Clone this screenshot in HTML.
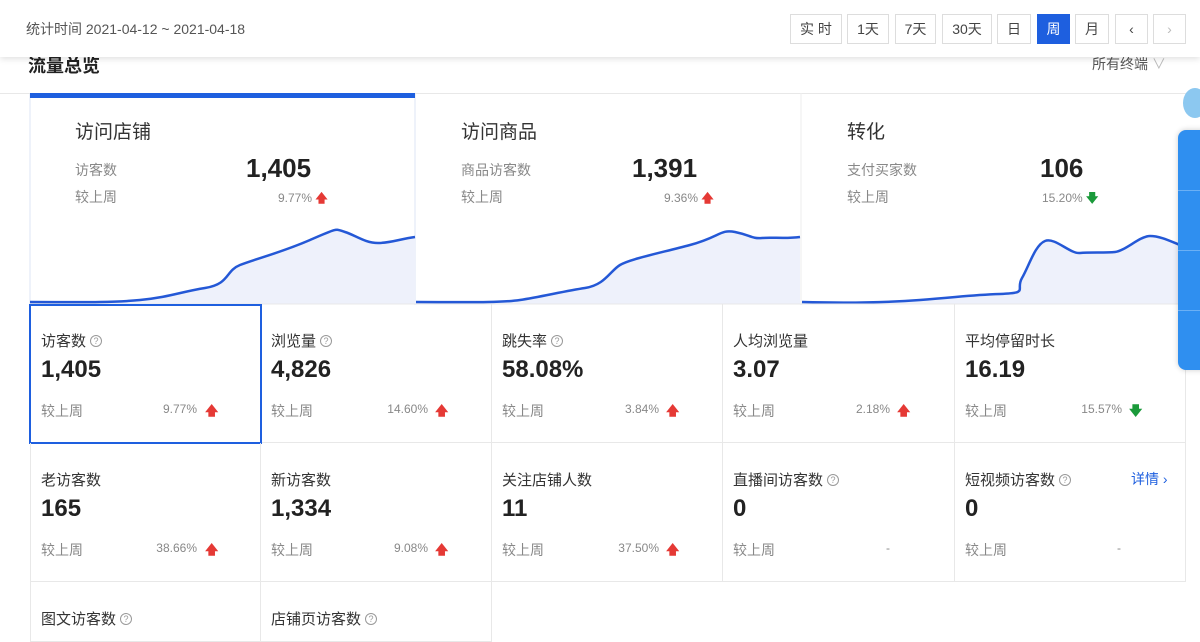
<!DOCTYPE html><html><head><meta charset="utf-8"><style>
*{box-sizing:border-box;margin:0;padding:0}
body{width:1200px;height:634px;overflow:hidden;background:#fff;font-family:"Liberation Sans","Noto Sans CJK SC",sans-serif;position:relative;color:#333}
.hdr{position:absolute;left:0;top:0;width:1200px;height:57px;background:#fff;box-shadow:0 2px 6px rgba(0,0,0,.12);z-index:2}
.hdr .t{position:absolute;left:26px;top:19px;font-size:14px;color:#555}
.btn{position:absolute;top:14px;height:30px;border:1px solid #ddd;font-size:14px;color:#444;text-align:center;line-height:28px;background:#fff}
.btn.on{background:#1e5fdf;border-color:#1e5fdf;color:#fff}
.a{position:absolute}
.grey{color:#888}
.cell{position:absolute;border-right:1px solid #e8e8e8;border-bottom:1px solid #e8e8e8}
.cell .n{position:absolute;left:10px;top:26px;font-size:15px;color:#333}
.cell .v{position:absolute;left:10px;top:52px;font-size:24px;font-weight:bold;color:#222}
.cell .c{position:absolute;left:10px;top:97px;font-size:14px;color:#888}
.cell .p{position:absolute;right:63px;top:98px;font-size:12px;color:#888}
.cell .ar{position:absolute;left:174px;top:98px;font-size:13px;font-weight:bold}
.q{display:inline-block;width:12px;height:12px;border:1px solid #999;border-radius:50%;font-size:9px;line-height:10px;text-align:center;color:#999;vertical-align:2px;margin-left:4px}
.up{color:#e53935}.dn{color:#1a9a3a}
</style></head><body>
<div class="hdr"><div class="t">统计时间 2021-04-12 ~ 2021-04-18</div>
<div class="btn" style="left:790px;width:52px">实 时</div>
<div class="btn" style="left:847px;width:42px">1天</div>
<div class="btn" style="left:895px;width:41px">7天</div>
<div class="btn" style="left:942px;width:50px">30天</div>
<div class="btn" style="left:997px;width:34px">日</div>
<div class="btn on" style="left:1037px;width:33px">周</div>
<div class="btn" style="left:1075px;width:34px">月</div>
<div class="btn" style="left:1115px;width:33px">‹</div>
<div class="btn" style="left:1153px;width:33px;color:#bbb">›</div>
</div>
<div class="a" style="left:28px;top:52px;font-size:18px;font-weight:bold;color:#222">流量总览</div>
<div class="a" style="left:1092px;top:54px;font-size:14px;color:#555">所有终端 <span style="color:#bbb">∨</span></div>
<div class="a" style="left:0;top:93px;width:1200px;border-top:1px solid #e8e8e8"></div>
<svg class="a" style="left:0;top:93px" width="1200" height="212">
<line x1="30" y1="0" x2="30" y2="212" stroke="#dde6f5"/>
<line x1="415" y1="0" x2="415" y2="212" stroke="#dde6f5"/>
<line x1="801" y1="0" x2="801" y2="212" stroke="#eee"/>
<g fill="#eef1fb" stroke="none">
<path d="M30,209 C70,209 110,210 140,207 S180,199 205,195 S225,178 240,172 S280,160 310,147 S335,136 345,139 S365,150 378,150 S400,146 415,144 L415,211 L30,211Z"/>
<path d="M416,209 C460,209 500,210 520,207 S565,198 585,195 S610,178 620,172 S660,160 690,152 S720,136 735,139 S752,146 762,145 S785,146 800,144 L800,211 L416,211Z"/>
<path d="M802,209 C840,210 880,210 920,207 S970,202 1000,201 S1015,197 1022,185 S1035,152 1045,148 S1070,161 1080,160 S1105,160 1115,159 S1140,143 1150,143 S1170,148 1180,152 L1180,211 L802,211Z"/>
</g>
<g fill="none" stroke="#2458d6" stroke-width="2.5">
<path d="M30,209 C70,209 110,210 140,207 S180,199 205,195 S225,178 240,172 S280,160 310,147 S335,136 345,139 S365,150 378,150 S400,146 415,144"/>
<path d="M416,209 C460,209 500,210 520,207 S565,198 585,195 S610,178 620,172 S660,160 690,152 S720,136 735,139 S752,146 762,145 S785,146 800,144"/>
<path d="M802,209 C840,210 880,210 920,207 S970,202 1000,201 S1015,197 1022,185 S1035,152 1045,148 S1070,161 1080,160 S1105,160 1115,159 S1140,143 1150,143 S1170,148 1180,152"/>
</g>
<rect x="30" y="0" width="385" height="5" fill="#1e5fdf"/>
<line x1="30" y1="211" x2="1186" y2="211" stroke="#e8e8e8"/>
</svg>
<div class="a" style="left:75px;top:117px;font-size:19px;color:#333">访问店铺</div>
<div class="a grey" style="left:75px;top:160px;font-size:14px">访客数</div>
<div class="a grey" style="left:75px;top:187px;font-size:14px">较上周</div>
<div class="a" style="left:246px;top:153px;font-size:26px;font-weight:bold;color:#222">1,405</div>
<div class="a grey" style="left:278px;top:189px;font-size:12px">9.77% <b class="up">🡅</b></div>
<div class="a" style="left:461px;top:117px;font-size:19px;color:#333">访问商品</div>
<div class="a grey" style="left:461px;top:160px;font-size:14px">商品访客数</div>
<div class="a grey" style="left:461px;top:187px;font-size:14px">较上周</div>
<div class="a" style="left:632px;top:153px;font-size:26px;font-weight:bold;color:#222">1,391</div>
<div class="a grey" style="left:664px;top:189px;font-size:12px">9.36% <b class="up">🡅</b></div>
<div class="a" style="left:847px;top:117px;font-size:19px;color:#333">转化</div>
<div class="a grey" style="left:847px;top:160px;font-size:14px">支付买家数</div>
<div class="a grey" style="left:847px;top:187px;font-size:14px">较上周</div>
<div class="a" style="left:1040px;top:153px;font-size:26px;font-weight:bold;color:#222">106</div>
<div class="a grey" style="left:1042px;top:189px;font-size:12px">15.20% <b class="dn">🡇</b></div>

<div class="cell" style="left:30px;top:304px;width:231px;height:139px;border-left:1px solid #e8e8e8"><div class="n">访客数<span class="q">?</span></div><div class="v">1,405</div><div class="c">较上周</div><div class="p">9.77%</div><div class="ar up">🡅</div></div>
<div class="cell" style="left:261px;top:304px;width:231px;height:139px"><div class="n">浏览量<span class="q">?</span></div><div class="v">4,826</div><div class="c">较上周</div><div class="p">14.60%</div><div class="ar up">🡅</div></div>
<div class="cell" style="left:492px;top:304px;width:231px;height:139px"><div class="n">跳失率<span class="q">?</span></div><div class="v">58.08%</div><div class="c">较上周</div><div class="p">3.84%</div><div class="ar up">🡅</div></div>
<div class="cell" style="left:723px;top:304px;width:232px;height:139px"><div class="n">人均浏览量</div><div class="v">3.07</div><div class="c">较上周</div><div class="p" style="right:64px">2.18%</div><div class="ar up">🡅</div></div>
<div class="cell" style="left:955px;top:304px;width:231px;height:139px"><div class="n">平均停留时长</div><div class="v">16.19</div><div class="c">较上周</div><div class="p">15.57%</div><div class="ar dn">🡇</div></div>
<div class="a" style="left:29px;top:304px;width:233px;height:140px;border:2px solid #1e5fdf"></div>

<div class="cell" style="left:30px;top:443px;width:231px;height:139px;border-left:1px solid #e8e8e8"><div class="n">老访客数</div><div class="v">165</div><div class="c">较上周</div><div class="p up">38.66%</div><div class="ar up">🡅</div></div>
<div class="cell" style="left:261px;top:443px;width:231px;height:139px"><div class="n">新访客数</div><div class="v">1,334</div><div class="c">较上周</div><div class="p">9.08%</div><div class="ar up">🡅</div></div>
<div class="cell" style="left:492px;top:443px;width:231px;height:139px"><div class="n">关注店铺人数</div><div class="v">11</div><div class="c">较上周</div><div class="p up">37.50%</div><div class="ar up">🡅</div></div>
<div class="cell" style="left:723px;top:443px;width:232px;height:139px"><div class="n">直播间访客数<span class="q">?</span></div><div class="v">0</div><div class="c">较上周</div><div class="p" style="right:64px">-</div></div>
<div class="cell" style="left:955px;top:443px;width:231px;height:139px"><div class="n">短视频访客数<span class="q">?</span></div><div class="v">0</div><div class="c">较上周</div><div class="p" style="right:64px">-</div><div class="a" style="left:176px;top:26px;font-size:14px;color:#1e5fdf">详情 ›</div></div>
<div class="cell" style="left:30px;top:582px;width:231px;height:60px;border-left:1px solid #e8e8e8"><div class="n">图文访客数<span class="q">?</span></div></div>
<div class="cell" style="left:261px;top:582px;width:231px;height:60px"><div class="n">店铺页访客数<span class="q">?</span></div></div>

<div class="a" style="left:1183px;top:88px;width:24px;height:30px;border-radius:50%;background:#8cc8f0"></div>
<div class="a" style="left:1178px;top:130px;width:30px;height:240px;background:#2f8ff0;border-radius:8px 0 0 8px;box-shadow:0 0 6px rgba(0,0,0,.2)">
<div style="position:absolute;top:60px;left:0;width:30px;border-top:1px solid #6bb0f5"></div>
<div style="position:absolute;top:120px;left:0;width:30px;border-top:1px solid #6bb0f5"></div>
<div style="position:absolute;top:180px;left:0;width:30px;border-top:1px solid #6bb0f5"></div></div>
</body></html>
